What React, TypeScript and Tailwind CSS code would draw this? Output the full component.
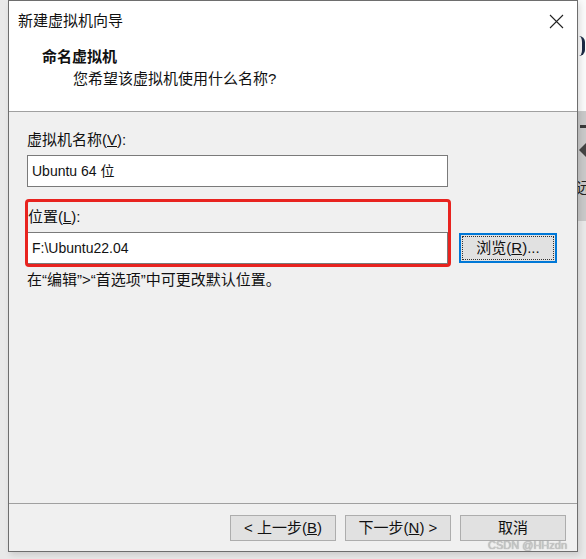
import React from 'react';

const font = "font-['Liberation_Sans','Noto_Sans_CJK_SC',sans-serif]";

function WinButton({ children, focused }: { children: React.ReactNode; focused?: boolean }) {
  return (
    <button
      className={`shrink-0 bg-[#e1e1e1] text-[15px] text-[#111] flex items-center justify-center ${
        focused
          ? 'h-[30px] w-[98px] border-2 border-[#0078d7] outline-1 outline-dotted outline-[#333] -outline-offset-4'
          : 'h-[26px] w-[106px] border border-[#adadad]'
      }`}
    >
      {children}
    </button>
  );
}

export default function App() {
  return (
    <div className={`w-[586px] h-[559px] bg-[#e9e9e9] flex overflow-hidden ${font}`}>
      {/* left gap */}
      <div className="w-[8px] shrink-0" />

      {/* dialog */}
      <div className="w-[570px] h-[552px] shrink-0 border border-[#6e6e6e] flex flex-col relative shadow-[2px_3px_6px_rgba(0,0,0,0.12)]">
        {/* header */}
        <div className="h-[111px] bg-white border-b border-[#a0a0a0] flex flex-col">
          <div className="h-[40px] flex items-center justify-between pl-[9px] pr-[12px]">
            <span className="text-[15px] text-[#111]">新建虚拟机向导</span>
            <svg width="15" height="15" viewBox="0 0 15 15" className="mr-[1px]">
              <path d="M1 1 L14 14 M14 1 L1 14" stroke="#222" strokeWidth="1.1" />
            </svg>
          </div>
          <div className="pl-[33px] mt-[5px] text-[15px] font-bold text-[#111] leading-[22px]">命名虚拟机</div>
          <div className="pl-[64px] text-[15px] text-[#111] leading-[22px]">您希望该虚拟机使用什么名称?</div>
        </div>

        {/* body */}
        <div className="flex-1 bg-[#f0f0f0] relative px-[18px] pt-[17px]">
          <div className="text-[15px] text-[#111] leading-[22px]">
            虚拟机名称(<span className="underline">V</span>):
          </div>
          <div className="mt-[4px] w-[421px] h-[32px] bg-white border border-[#7a7a7a] flex items-center px-[4px] text-[14px] text-[#111]">
            Ubuntu 64 位
          </div>

          <div className="mt-[19px] text-[15px] text-[#111] leading-[22px] pl-[1px]">
            位置(<span className="underline">L</span>):
          </div>
          <div className="mt-[4px] flex items-center gap-[11px]">
            <div className="shrink-0 w-[421px] h-[32px] bg-white border border-[#7a7a7a] flex items-center px-[4px] text-[14px] text-[#111]">
              F:\Ubuntu22.04
            </div>
            <WinButton focused>
              浏览(<span className="underline">R</span>)...
            </WinButton>
          </div>
          <div className="mt-[5px] text-[15px] text-[#111] leading-[22px]">在“编辑”&gt;“首选项”中可更改默认位置。</div>

          {/* red annotation box */}
          <div className="absolute left-[16px] top-[87px] w-[426px] h-[68px] border-[3px] border-[#e8231f] rounded-[4px]" />
        </div>

        {/* footer */}
        <div className="h-[48px] bg-[#f0f0f0] border-t border-[#a0a0a0] flex items-start justify-end gap-[9px] pt-[11px] pr-[11px]">
          <WinButton>
            &lt; 上一步(<span className="underline">B</span>)
          </WinButton>
          <WinButton>
            下一步(<span className="underline">N</span>) &gt;
          </WinButton>
          <WinButton>取消</WinButton>
        </div>

        <span className="absolute right-[10px] bottom-[-2px] text-[11px] text-[#c8c8c8] [text-shadow:0_0_1px_#888]">
          CSDN @HHzdn
        </span>
      </div>

      {/* right strip: background app */}
      <div className="flex-1 flex flex-col overflow-hidden">
        <div className="h-[111px] bg-[#fafafa] pt-[36px] pl-[1px]">
          <div className="w-[6px] h-[20px] border-r-[3px] border-[#1b2a44] rounded-r-full" />
        </div>
        <div className="h-[110px] bg-[#c9c9c9] flex flex-col pt-[14px] gap-[14px]">
          <div className="w-[8px] h-[3px] bg-[#3a3a3a] ml-[2px]" />
          <div className="w-0 h-0 border-y-[8px] border-y-transparent border-r-[8px] border-r-[#444] ml-[1px]" />
          <span className="text-[15px] text-[#222] -ml-[2px] mt-[8px] leading-none">远</span>
        </div>
        <div className="flex-1 bg-[#e9e9e9]" />
      </div>
    </div>
  );
}
